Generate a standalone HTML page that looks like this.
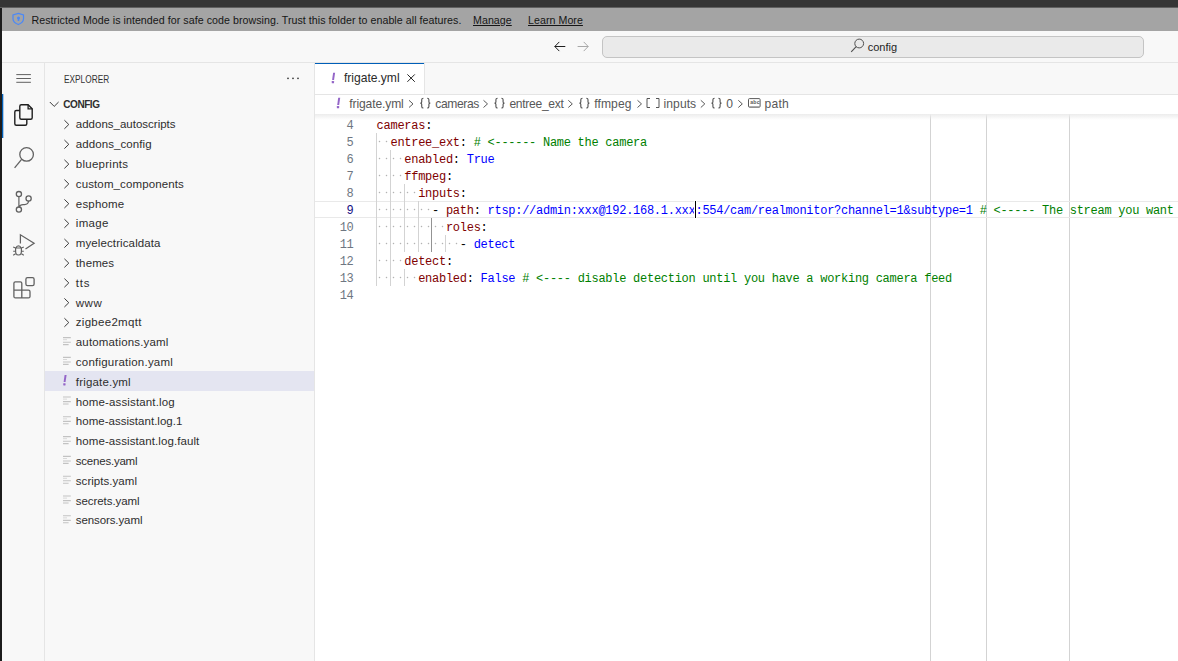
<!DOCTYPE html><html><head><meta charset="utf-8"><style>
*{margin:0;padding:0;box-sizing:border-box}
html,body{width:1178px;height:661px;overflow:hidden;background:#f8f8f8;font-family:"Liberation Sans",sans-serif;color:#3b3b3b}
.a{position:absolute}
svg{position:absolute;overflow:visible}
#topbar{left:0;top:0;width:1178px;height:7px;background:#353535}
#topedge{left:0;top:7px;width:1178px;height:1px;background:#606060}
#leftedge{left:0;top:8px;width:2px;height:653px;background:#1c1c1c}
#banner{left:2px;top:8px;width:1176px;height:23px;background:#a4a4a4;color:#161616;font-size:10.65px;letter-spacing:0.05px}
#banner span{position:absolute;top:5.6px;white-space:nowrap}
#titleborder{left:2px;top:62px;width:1176px;height:1px;background:#e5e5e5}
#search{left:602px;top:36px;width:542px;height:22px;background:#eaeaea;border:1px solid #c4c4c4;border-radius:5px}
#actborder{left:44px;top:63px;width:1px;height:598px;background:#e5e5e5}
#sideborder{left:314px;top:63px;width:1px;height:598px;background:#e5e5e5}
.row{position:absolute;left:45px;width:269px;height:19.8px;font-size:11.5px;line-height:19.8px;color:#2e2e2e;white-space:nowrap}
.sel{background:#e4e5f1;height:20px}
#tabline{left:315px;top:94px;width:863px;height:1px;background:#e5e5e5}
#tab{left:315px;top:63px;width:109px;height:31px;background:#fff;border-top:1px solid #005fb8}
#tabr{left:424px;top:63px;width:1px;height:31px;background:#e5e5e5}
#crumbs{left:315px;top:95px;width:863px;height:19px;background:#fff}
.cr{position:absolute;top:94.8px;height:19px;line-height:19px;font-size:12.1px;color:#585858;white-space:nowrap}
#editor{left:315px;top:114px;width:863px;height:547px;background:#fff}
#shadow{left:315px;top:114px;width:863px;height:6px;background:linear-gradient(#ececec,rgba(255,255,255,0))}
.ln{position:absolute;left:315px;width:38.2px;height:17px;line-height:17px;text-align:right;font-family:"Liberation Mono",monospace;font-size:12px;letter-spacing:-0.45px;color:#6e7681;white-space:pre}
.code{position:absolute;left:376.6px;height:17px;line-height:17px;font-family:"Liberation Mono",monospace;font-size:12px;letter-spacing:-0.27px;color:#000;white-space:pre}
.k{color:#800000}.s{color:#0000ff}.c{color:#008000}
.g{position:absolute;width:1px;background:#d3d3d3}
.dot{position:absolute;width:1px;height:1px;background:#c8c8c8}.dotx{position:absolute;width:3px;height:1px;background:rgba(0,0,0,0.05)}.doty{position:absolute;width:1px;height:3px;background:rgba(0,0,0,0.05)}
</style></head><body>
<div class="a" id="topbar"></div><div class="a" id="topedge"></div><div class="a" id="leftedge"></div>
<div class="a" id="banner"><svg style="left:10px;top:4px" width="14" height="14" viewBox="0 0 14 14"><path d="M6.3 1.4 L11.5 2.9 V6.8 C11.5 9.5 9.3 11.4 6.3 12.5 C3.3 11.4 1 9.5 1 6.8 V2.9 Z" fill="none" stroke="#4a88f7" stroke-width="1.2"/><circle cx="6.5" cy="5.9" r="1.5" fill="#4a88f7"/><path d="M5.9 6.5 H7.1 L7.3 9 H5.7 Z" fill="#4a88f7"/></svg><span style="left:29.5px">Restricted Mode is intended for safe code browsing. Trust this folder to enable all features.</span><span style="left:471px;text-decoration:underline">Manage</span><span style="left:526px;text-decoration:underline">Learn More</span></div>
<div class="a" id="titleborder"></div>
<svg style="left:553px;top:40px" width="14" height="12" viewBox="0 0 14 12"><path d="M6.3 1.9 L1.8 6.5 L6.3 11.1 M1.8 6.5 H12.3" fill="none" stroke="#1e1e1e" stroke-width="1"/></svg>
<svg style="left:576px;top:40px" width="14" height="12" viewBox="0 0 14 12"><path d="M7.7 1.9 L12.2 6.5 L7.7 11.1 M12.2 6.5 H1.6" fill="none" stroke="#a8a8a8" stroke-width="1"/></svg>
<div class="a" id="search"></div>
<svg style="left:850px;top:38px" width="15" height="15" viewBox="0 0 15 15"><circle cx="9.2" cy="5.5" r="4.4" fill="none" stroke="#505050" stroke-width="1"/><path d="M6.2 8.6 L1.2 13.8" stroke="#505050" stroke-width="1.1"/></svg>
<div class="a" style="left:867.7px;top:40.7px;font-size:11px;color:#1e1e1e">config</div>
<div class="a" id="actborder"></div><div class="a" id="sideborder"></div>
<svg style="left:0;top:0" width="45" height="320" viewBox="0 0 45 320"><rect x="2" y="94" width="1.3" height="44" fill="#005fb8"/><path d="M16.3 74.6 H30.9 M16.3 78.5 H30.9 M16.3 82.3 H30.9" stroke="#616161" stroke-width="1"/><path d="M21.3 104.7 H28.1 L32.2 108.8 V117.8 Q32.2 119.3 30.7 119.3 H21.3 Q19.8 119.3 19.8 117.8 V106.2 Q19.8 104.7 21.3 104.7 Z" fill="none" stroke="#1f1f1f" stroke-width="1.4"/><path d="M28.1 104.7 V108.8 H32.2" fill="none" stroke="#1f1f1f" stroke-width="1.3"/><path d="M19.8 110.5 H16.3 Q14.8 110.5 14.8 112 V123.7 Q14.8 125.2 16.3 125.2 H25.3 Q26.8 125.2 26.8 123.7 V119.3" fill="none" stroke="#1f1f1f" stroke-width="1.4"/><circle cx="26.6" cy="154.4" r="6.8" fill="none" stroke="#616161" stroke-width="1.3"/><path d="M21.6 159.4 L14.6 167.8" stroke="#616161" stroke-width="1.3"/><circle cx="18.9" cy="194.1" r="2.6" fill="none" stroke="#616161" stroke-width="1.3"/><circle cx="18.9" cy="209.6" r="2.6" fill="none" stroke="#616161" stroke-width="1.3"/><circle cx="28.6" cy="198.5" r="2.6" fill="none" stroke="#616161" stroke-width="1.3"/><path d="M18.9 196.4 V207.3 M19.3 207 Q20 204.6 23 204.6 H24.5 Q28.3 204.6 28.6 200.8" fill="none" stroke="#616161" stroke-width="1.2"/><path d="M20.4 243.4 V234.8 L34.1 243.2 L25.5 248.9" fill="none" stroke="#616161" stroke-width="1.25" stroke-linejoin="miter"/><path d="M15.6 248 V251.5 C15.6 253.8 17 255 18.5 255 C20 255 21.4 253.8 21.4 251.5 V248 Z M16.2 247.8 C16.4 246.3 17.3 245.8 18.5 245.8 C19.7 245.8 20.6 246.3 20.8 247.8" fill="none" stroke="#616161" stroke-width="1.2"/><path d="M13.2 246.9 L15.6 247.9 M13.2 251.2 H15.6 M13.2 255.3 L15.6 253.7 M23.8 246.9 L21.4 247.9 M23.8 251.2 H21.4 M23.8 255.3 L21.4 253.7" fill="none" stroke="#616161" stroke-width="1.1"/><path d="M13.9 283.3 Q13.9 281.8 15.4 281.8 H20.3 Q21.8 281.8 21.8 283.3 V290.2 H28.5 Q30 290.2 30 291.7 V296.4 Q30 297.9 28.5 297.9 H15.4 Q13.9 297.9 13.9 296.4 Z M13.9 290.2 H21.8 V297.9" fill="none" stroke="#616161" stroke-width="1.3"/><rect x="25.9" y="277.7" width="8.2" height="7.9" rx="1.6" fill="none" stroke="#616161" stroke-width="1.3"/></svg>
<div class="a" style="left:63.9px;top:74.4px;font-size:10px;line-height:12px;color:#333333;white-space:nowrap;transform-origin:0 0;transform:scaleX(0.83)">EXPLORER</div>
<svg style="left:0;top:0" width="320" height="100" viewBox="0 0 320 100"><circle cx="288" cy="78.3" r="0.9" fill="#3b3b3b"/><circle cx="293" cy="78.3" r="0.9" fill="#3b3b3b"/><circle cx="298" cy="78.3" r="0.9" fill="#3b3b3b"/></svg>
<div class="row" style="top:93.4px"><span class="a" style="left:18.3px;top:1.6px;font-weight:bold;font-size:10px;letter-spacing:-0.45px;color:#2e2e2e">CONFIG</span></div>
<div class="row" style="top:113.2px"><span class="a" style="left:30.8px;top:2.2px;letter-spacing:0.000px">addons_autoscripts</span></div>
<div class="row" style="top:133.0px"><span class="a" style="left:30.8px;top:2.2px;letter-spacing:0.083px">addons_config</span></div>
<div class="row" style="top:152.8px"><span class="a" style="left:30.8px;top:2.2px;letter-spacing:0.267px">blueprints</span></div>
<div class="row" style="top:172.6px"><span class="a" style="left:30.8px;top:2.2px;letter-spacing:0.119px">custom_components</span></div>
<div class="row" style="top:192.4px"><span class="a" style="left:30.8px;top:2.2px;letter-spacing:0.183px">esphome</span></div>
<div class="row" style="top:212.2px"><span class="a" style="left:30.8px;top:2.2px;letter-spacing:0.325px">image</span></div>
<div class="row" style="top:232.0px"><span class="a" style="left:30.8px;top:2.2px;letter-spacing:0.107px">myelectricaldata</span></div>
<div class="row" style="top:251.8px"><span class="a" style="left:30.8px;top:2.2px;letter-spacing:0.120px">themes</span></div>
<div class="row" style="top:271.6px"><span class="a" style="left:30.8px;top:2.2px;letter-spacing:0.800px">tts</span></div>
<div class="row" style="top:291.4px"><span class="a" style="left:30.8px;top:2.2px;letter-spacing:0.500px">www</span></div>
<div class="row" style="top:311.2px"><span class="a" style="left:30.8px;top:2.2px;letter-spacing:0.290px">zigbee2mqtt</span></div>
<div class="row" style="top:331.0px"><span class="a" style="left:30.8px;top:2.2px;letter-spacing:0.153px">automations.yaml</span></div>
<div class="row" style="top:350.8px"><span class="a" style="left:30.8px;top:2.2px;letter-spacing:0.218px">configuration.yaml</span></div>
<div class="row sel" style="top:370.6px"><span class="a" style="left:30.8px;top:2.2px;letter-spacing:0.180px">frigate.yml</span></div>
<div class="row" style="top:390.4px"><span class="a" style="left:30.8px;top:2.2px;letter-spacing:0.135px">home-assistant.log</span></div>
<div class="row" style="top:410.2px"><span class="a" style="left:30.8px;top:2.2px;letter-spacing:0.026px">home-assistant.log.1</span></div>
<div class="row" style="top:430.0px"><span class="a" style="left:30.8px;top:2.2px;letter-spacing:0.087px">home-assistant.log.fault</span></div>
<div class="row" style="top:449.8px"><span class="a" style="left:30.8px;top:2.2px;letter-spacing:-0.220px">scenes.yaml</span></div>
<div class="row" style="top:469.6px"><span class="a" style="left:30.8px;top:2.2px;letter-spacing:0.045px">scripts.yaml</span></div>
<div class="row" style="top:489.4px"><span class="a" style="left:30.8px;top:2.2px;letter-spacing:-0.064px">secrets.yaml</span></div>
<div class="row" style="top:509.2px"><span class="a" style="left:30.8px;top:2.2px;letter-spacing:-0.100px">sensors.yaml</span></div>
<div class="a" id="tabline"></div><div class="a" id="tab"></div><div class="a" id="tabr"></div>
<div class="a" id="crumbs"></div><div class="a" id="editor"></div>
<svg style="left:0;top:0" width="1" height="1" viewBox="0 0 1 1"><path d="M333.10 72.80 h2 l-1.05 7.2 h-1.95 z" fill="#9466c8"/><rect x="331.75" y="81.10" width="2.3" height="2.2" rx="0.4" fill="#9466c8"/><path d="M338.20 97.80 h2 l-1.05 7.2 h-1.95 z" fill="#9466c8"/><rect x="336.85" y="106.10" width="2.3" height="2.2" rx="0.4" fill="#9466c8"/></svg>
<div class="a" style="left:344px;top:70.8px;font-size:12.1px;letter-spacing:-0.02px;color:#2a2a2a;white-space:nowrap">frigate.yml</div>
<svg style="left:0;top:0" width="1" height="1" viewBox="0 0 1 1"><path d="M407.4 74.4 L414.8 81.8 M414.8 74.4 L407.4 81.8" stroke="#262626" stroke-width="1"/></svg>
<div class="cr" style="left:349.3px;letter-spacing:-0.13px">frigate.yml</div>
<div class="cr" style="left:435.3px;letter-spacing:-0.38px">cameras</div>
<div class="cr" style="left:509.4px;letter-spacing:-0.3px">entree_ext</div>
<div class="cr" style="left:594.2px;letter-spacing:0.12px">ffmpeg</div>
<div class="cr" style="left:663.6px;letter-spacing:0.05px">inputs</div>
<div class="cr" style="left:726.3px;">0</div>
<div class="cr" style="left:764.6px;letter-spacing:0.2px">path</div>
<svg style="left:0;top:0" width="320" height="600" viewBox="0 0 320 600">
<path d="M49.8 102 L54.2 106.4 L58.6 102" fill="none" stroke="#3b3b3b" stroke-width="1"/>
<path d="M64.4 120.2 L68.8 124.5 L64.4 128.8" fill="none" stroke="#3b3b3b" stroke-width="1"/>
<path d="M64.4 140.0 L68.8 144.3 L64.4 148.6" fill="none" stroke="#3b3b3b" stroke-width="1"/>
<path d="M64.4 159.8 L68.8 164.1 L64.4 168.4" fill="none" stroke="#3b3b3b" stroke-width="1"/>
<path d="M64.4 179.6 L68.8 183.9 L64.4 188.2" fill="none" stroke="#3b3b3b" stroke-width="1"/>
<path d="M64.4 199.4 L68.8 203.7 L64.4 208.0" fill="none" stroke="#3b3b3b" stroke-width="1"/>
<path d="M64.4 219.2 L68.8 223.5 L64.4 227.8" fill="none" stroke="#3b3b3b" stroke-width="1"/>
<path d="M64.4 239.0 L68.8 243.3 L64.4 247.6" fill="none" stroke="#3b3b3b" stroke-width="1"/>
<path d="M64.4 258.8 L68.8 263.1 L64.4 267.4" fill="none" stroke="#3b3b3b" stroke-width="1"/>
<path d="M64.4 278.6 L68.8 282.9 L64.4 287.2" fill="none" stroke="#3b3b3b" stroke-width="1"/>
<path d="M64.4 298.4 L68.8 302.7 L64.4 307.0" fill="none" stroke="#3b3b3b" stroke-width="1"/>
<path d="M64.4 318.2 L68.8 322.5 L64.4 326.8" fill="none" stroke="#3b3b3b" stroke-width="1"/>
<path d="M63 337.6 H70.8 M63 342.2 H70.8 M63 344.6 H68.6" stroke="#c2c2c2" stroke-width="1.1"/><path d="M63 339.7 H67" stroke="#d8d8d8" stroke-width="1"/>
<path d="M63 357.4 H70.8 M63 362.0 H70.8 M63 364.4 H68.6" stroke="#c2c2c2" stroke-width="1.1"/><path d="M63 359.5 H67" stroke="#d8d8d8" stroke-width="1"/>
<path d="M64.60 374.90 h2 l-1.05 7.2 h-1.95 z" fill="#9466c8"/><rect x="63.25" y="383.20" width="2.3" height="2.2" rx="0.4" fill="#9466c8"/>
<path d="M63 397.0 H70.8 M63 401.6 H70.8 M63 404.0 H68.6" stroke="#c2c2c2" stroke-width="1.1"/><path d="M63 399.1 H67" stroke="#d8d8d8" stroke-width="1"/>
<path d="M63 416.8 H70.8 M63 421.4 H70.8 M63 423.8 H68.6" stroke="#c2c2c2" stroke-width="1.1"/><path d="M63 418.9 H67" stroke="#d8d8d8" stroke-width="1"/>
<path d="M63 436.6 H70.8 M63 441.2 H70.8 M63 443.6 H68.6" stroke="#c2c2c2" stroke-width="1.1"/><path d="M63 438.7 H67" stroke="#d8d8d8" stroke-width="1"/>
<path d="M63 456.4 H70.8 M63 461.0 H70.8 M63 463.4 H68.6" stroke="#c2c2c2" stroke-width="1.1"/><path d="M63 458.5 H67" stroke="#d8d8d8" stroke-width="1"/>
<path d="M63 476.2 H70.8 M63 480.8 H70.8 M63 483.2 H68.6" stroke="#c2c2c2" stroke-width="1.1"/><path d="M63 478.3 H67" stroke="#d8d8d8" stroke-width="1"/>
<path d="M63 496.0 H70.8 M63 500.6 H70.8 M63 503.0 H68.6" stroke="#c2c2c2" stroke-width="1.1"/><path d="M63 498.1 H67" stroke="#d8d8d8" stroke-width="1"/>
<path d="M63 515.8 H70.8 M63 520.4 H70.8 M63 522.8 H68.6" stroke="#c2c2c2" stroke-width="1.1"/><path d="M63 517.9 H67" stroke="#d8d8d8" stroke-width="1"/>
</svg>
<svg style="left:0;top:0" width="1" height="1" viewBox="0 0 1 1">
<path d="M409.0 100.3 L413.0 103.9 L409.0 107.5" fill="none" stroke="#5a5a5a" stroke-width="1"/>
<path d="M483.5 100.3 L487.5 103.9 L483.5 107.5" fill="none" stroke="#5a5a5a" stroke-width="1"/>
<path d="M568.3 100.3 L572.3 103.9 L568.3 107.5" fill="none" stroke="#5a5a5a" stroke-width="1"/>
<path d="M637.5 100.3 L641.5 103.9 L637.5 107.5" fill="none" stroke="#5a5a5a" stroke-width="1"/>
<path d="M700.8 100.3 L704.8 103.9 L700.8 107.5" fill="none" stroke="#5a5a5a" stroke-width="1"/>
<path d="M738.3 100.3 L742.3 103.9 L738.3 107.5" fill="none" stroke="#5a5a5a" stroke-width="1"/>
<path d="M423.40 98.20 Q421.70 98.20 421.70 99.80 V101.90 Q421.70 103.10 420.30 103.10 Q421.70 103.10 421.70 104.30 V106.40 Q421.70 108.00 423.40 108.00 M427.20 98.20 Q428.90 98.20 428.90 99.80 V101.90 Q428.90 103.10 430.30 103.10 Q428.90 103.10 428.90 104.30 V106.40 Q428.90 108.00 427.20 108.00" fill="none" stroke="#555555" stroke-width="1.15"/>
<path d="M497.60 98.20 Q495.90 98.20 495.90 99.80 V101.90 Q495.90 103.10 494.50 103.10 Q495.90 103.10 495.90 104.30 V106.40 Q495.90 108.00 497.60 108.00 M501.40 98.20 Q503.10 98.20 503.10 99.80 V101.90 Q503.10 103.10 504.50 103.10 Q503.10 103.10 503.10 104.30 V106.40 Q503.10 108.00 501.40 108.00" fill="none" stroke="#555555" stroke-width="1.15"/>
<path d="M582.50 98.20 Q580.80 98.20 580.80 99.80 V101.90 Q580.80 103.10 579.40 103.10 Q580.80 103.10 580.80 104.30 V106.40 Q580.80 108.00 582.50 108.00 M586.30 98.20 Q588.00 98.20 588.00 99.80 V101.90 Q588.00 103.10 589.40 103.10 Q588.00 103.10 588.00 104.30 V106.40 Q588.00 108.00 586.30 108.00" fill="none" stroke="#555555" stroke-width="1.15"/>
<path d="M714.60 98.20 Q712.90 98.20 712.90 99.80 V101.90 Q712.90 103.10 711.50 103.10 Q712.90 103.10 712.90 104.30 V106.40 Q712.90 108.00 714.60 108.00 M718.40 98.20 Q720.10 98.20 720.10 99.80 V101.90 Q720.10 103.10 721.50 103.10 Q720.10 103.10 720.10 104.30 V106.40 Q720.10 108.00 718.40 108.00" fill="none" stroke="#555555" stroke-width="1.15"/>
<path d="M650 98.5 H647 V107.5 H650 M656 98.5 H659 V107.5 H656" fill="none" stroke="#555555" stroke-width="1"/>
<rect x="748.5" y="98.6" width="11.6" height="8.6" rx="1" fill="none" stroke="#5a5a5a" stroke-width="1"/><path d="M749 106.9 H759.6" stroke="#9a9a9a" stroke-width="1"/><text x="750.2" y="104" font-family="Liberation Sans" font-weight="bold" font-size="5.2" fill="#5a5a5a" letter-spacing="0.2">abc</text>
</svg>
<div class="a" style="left:930.1px;top:114px;width:1px;height:547px;background:#d3d3d3"></div>
<div class="a" style="left:986.1px;top:114px;width:1px;height:547px;background:#d3d3d3"></div>
<div class="a" style="left:1068.9px;top:114px;width:1px;height:547px;background:#d3d3d3"></div>
<div class="a" style="left:315px;top:201px;width:863px;height:17px;border-top:1px solid #e9e9e9;border-bottom:1px solid #e9e9e9"></div>
<div class="g" style="left:376px;top:132.8px;height:17px;background:#d3d3d3"></div>
<div class="g" style="left:376px;top:149.8px;height:17px;background:#d3d3d3"></div>
<div class="g" style="left:390px;top:149.8px;height:17px;background:#d3d3d3"></div>
<div class="g" style="left:376px;top:166.8px;height:17px;background:#d3d3d3"></div>
<div class="g" style="left:390px;top:166.8px;height:17px;background:#d3d3d3"></div>
<div class="g" style="left:376px;top:183.8px;height:17px;background:#d3d3d3"></div>
<div class="g" style="left:390px;top:183.8px;height:17px;background:#d3d3d3"></div>
<div class="g" style="left:404px;top:183.8px;height:17px;background:#d3d3d3"></div>
<div class="g" style="left:376px;top:200.8px;height:17px;background:#d3d3d3"></div>
<div class="g" style="left:390px;top:200.8px;height:17px;background:#d3d3d3"></div>
<div class="g" style="left:404px;top:200.8px;height:17px;background:#d3d3d3"></div>
<div class="g" style="left:418px;top:200.8px;height:17px;background:#d3d3d3"></div>
<div class="g" style="left:376px;top:217.8px;height:17px;background:#d3d3d3"></div>
<div class="g" style="left:390px;top:217.8px;height:17px;background:#d3d3d3"></div>
<div class="g" style="left:404px;top:217.8px;height:17px;background:#d3d3d3"></div>
<div class="g" style="left:418px;top:217.8px;height:17px;background:#d3d3d3"></div>
<div class="g" style="left:431px;top:217.8px;height:17px;background:#939393"></div>
<div class="g" style="left:376px;top:234.8px;height:17px;background:#d3d3d3"></div>
<div class="g" style="left:390px;top:234.8px;height:17px;background:#d3d3d3"></div>
<div class="g" style="left:404px;top:234.8px;height:17px;background:#d3d3d3"></div>
<div class="g" style="left:418px;top:234.8px;height:17px;background:#d3d3d3"></div>
<div class="g" style="left:431px;top:234.8px;height:17px;background:#939393"></div>
<div class="g" style="left:445px;top:234.8px;height:17px;background:#d3d3d3"></div>
<div class="g" style="left:376px;top:251.8px;height:17px;background:#d3d3d3"></div>
<div class="g" style="left:390px;top:251.8px;height:17px;background:#d3d3d3"></div>
<div class="g" style="left:376px;top:268.8px;height:17px;background:#d3d3d3"></div>
<div class="g" style="left:390px;top:268.8px;height:17px;background:#d3d3d3"></div>
<div class="g" style="left:404px;top:268.8px;height:17px;background:#d3d3d3"></div>
<div class="dot" style="left:379px;top:141px"></div><div class="dotx" style="left:378px;top:141px"></div><div class="doty" style="left:379px;top:140px"></div>
<div class="dot" style="left:386px;top:141px"></div><div class="dotx" style="left:385px;top:141px"></div><div class="doty" style="left:386px;top:140px"></div>
<div class="dot" style="left:379px;top:158px"></div><div class="dotx" style="left:378px;top:158px"></div><div class="doty" style="left:379px;top:157px"></div>
<div class="dot" style="left:386px;top:158px"></div><div class="dotx" style="left:385px;top:158px"></div><div class="doty" style="left:386px;top:157px"></div>
<div class="dot" style="left:393px;top:158px"></div><div class="dotx" style="left:392px;top:158px"></div><div class="doty" style="left:393px;top:157px"></div>
<div class="dot" style="left:400px;top:158px"></div><div class="dotx" style="left:399px;top:158px"></div><div class="doty" style="left:400px;top:157px"></div>
<div class="dot" style="left:379px;top:175px"></div><div class="dotx" style="left:378px;top:175px"></div><div class="doty" style="left:379px;top:174px"></div>
<div class="dot" style="left:386px;top:175px"></div><div class="dotx" style="left:385px;top:175px"></div><div class="doty" style="left:386px;top:174px"></div>
<div class="dot" style="left:393px;top:175px"></div><div class="dotx" style="left:392px;top:175px"></div><div class="doty" style="left:393px;top:174px"></div>
<div class="dot" style="left:400px;top:175px"></div><div class="dotx" style="left:399px;top:175px"></div><div class="doty" style="left:400px;top:174px"></div>
<div class="dot" style="left:379px;top:192px"></div><div class="dotx" style="left:378px;top:192px"></div><div class="doty" style="left:379px;top:191px"></div>
<div class="dot" style="left:386px;top:192px"></div><div class="dotx" style="left:385px;top:192px"></div><div class="doty" style="left:386px;top:191px"></div>
<div class="dot" style="left:393px;top:192px"></div><div class="dotx" style="left:392px;top:192px"></div><div class="doty" style="left:393px;top:191px"></div>
<div class="dot" style="left:400px;top:192px"></div><div class="dotx" style="left:399px;top:192px"></div><div class="doty" style="left:400px;top:191px"></div>
<div class="dot" style="left:407px;top:192px"></div><div class="dotx" style="left:406px;top:192px"></div><div class="doty" style="left:407px;top:191px"></div>
<div class="dot" style="left:414px;top:192px"></div><div class="dotx" style="left:413px;top:192px"></div><div class="doty" style="left:414px;top:191px"></div>
<div class="dot" style="left:379px;top:209px"></div><div class="dotx" style="left:378px;top:209px"></div><div class="doty" style="left:379px;top:208px"></div>
<div class="dot" style="left:386px;top:209px"></div><div class="dotx" style="left:385px;top:209px"></div><div class="doty" style="left:386px;top:208px"></div>
<div class="dot" style="left:393px;top:209px"></div><div class="dotx" style="left:392px;top:209px"></div><div class="doty" style="left:393px;top:208px"></div>
<div class="dot" style="left:400px;top:209px"></div><div class="dotx" style="left:399px;top:209px"></div><div class="doty" style="left:400px;top:208px"></div>
<div class="dot" style="left:407px;top:209px"></div><div class="dotx" style="left:406px;top:209px"></div><div class="doty" style="left:407px;top:208px"></div>
<div class="dot" style="left:414px;top:209px"></div><div class="dotx" style="left:413px;top:209px"></div><div class="doty" style="left:414px;top:208px"></div>
<div class="dot" style="left:421px;top:209px"></div><div class="dotx" style="left:420px;top:209px"></div><div class="doty" style="left:421px;top:208px"></div>
<div class="dot" style="left:428px;top:209px"></div><div class="dotx" style="left:427px;top:209px"></div><div class="doty" style="left:428px;top:208px"></div>
<div class="dot" style="left:379px;top:226px"></div><div class="dotx" style="left:378px;top:226px"></div><div class="doty" style="left:379px;top:225px"></div>
<div class="dot" style="left:386px;top:226px"></div><div class="dotx" style="left:385px;top:226px"></div><div class="doty" style="left:386px;top:225px"></div>
<div class="dot" style="left:393px;top:226px"></div><div class="dotx" style="left:392px;top:226px"></div><div class="doty" style="left:393px;top:225px"></div>
<div class="dot" style="left:400px;top:226px"></div><div class="dotx" style="left:399px;top:226px"></div><div class="doty" style="left:400px;top:225px"></div>
<div class="dot" style="left:407px;top:226px"></div><div class="dotx" style="left:406px;top:226px"></div><div class="doty" style="left:407px;top:225px"></div>
<div class="dot" style="left:414px;top:226px"></div><div class="dotx" style="left:413px;top:226px"></div><div class="doty" style="left:414px;top:225px"></div>
<div class="dot" style="left:421px;top:226px"></div><div class="dotx" style="left:420px;top:226px"></div><div class="doty" style="left:421px;top:225px"></div>
<div class="dot" style="left:428px;top:226px"></div><div class="dotx" style="left:427px;top:226px"></div><div class="doty" style="left:428px;top:225px"></div>
<div class="dot" style="left:435px;top:226px"></div><div class="dotx" style="left:434px;top:226px"></div><div class="doty" style="left:435px;top:225px"></div>
<div class="dot" style="left:442px;top:226px"></div><div class="dotx" style="left:441px;top:226px"></div><div class="doty" style="left:442px;top:225px"></div>
<div class="dot" style="left:379px;top:243px"></div><div class="dotx" style="left:378px;top:243px"></div><div class="doty" style="left:379px;top:242px"></div>
<div class="dot" style="left:386px;top:243px"></div><div class="dotx" style="left:385px;top:243px"></div><div class="doty" style="left:386px;top:242px"></div>
<div class="dot" style="left:393px;top:243px"></div><div class="dotx" style="left:392px;top:243px"></div><div class="doty" style="left:393px;top:242px"></div>
<div class="dot" style="left:400px;top:243px"></div><div class="dotx" style="left:399px;top:243px"></div><div class="doty" style="left:400px;top:242px"></div>
<div class="dot" style="left:407px;top:243px"></div><div class="dotx" style="left:406px;top:243px"></div><div class="doty" style="left:407px;top:242px"></div>
<div class="dot" style="left:414px;top:243px"></div><div class="dotx" style="left:413px;top:243px"></div><div class="doty" style="left:414px;top:242px"></div>
<div class="dot" style="left:421px;top:243px"></div><div class="dotx" style="left:420px;top:243px"></div><div class="doty" style="left:421px;top:242px"></div>
<div class="dot" style="left:428px;top:243px"></div><div class="dotx" style="left:427px;top:243px"></div><div class="doty" style="left:428px;top:242px"></div>
<div class="dot" style="left:435px;top:243px"></div><div class="dotx" style="left:434px;top:243px"></div><div class="doty" style="left:435px;top:242px"></div>
<div class="dot" style="left:442px;top:243px"></div><div class="dotx" style="left:441px;top:243px"></div><div class="doty" style="left:442px;top:242px"></div>
<div class="dot" style="left:449px;top:243px"></div><div class="dotx" style="left:448px;top:243px"></div><div class="doty" style="left:449px;top:242px"></div>
<div class="dot" style="left:456px;top:243px"></div><div class="dotx" style="left:455px;top:243px"></div><div class="doty" style="left:456px;top:242px"></div>
<div class="dot" style="left:379px;top:260px"></div><div class="dotx" style="left:378px;top:260px"></div><div class="doty" style="left:379px;top:259px"></div>
<div class="dot" style="left:386px;top:260px"></div><div class="dotx" style="left:385px;top:260px"></div><div class="doty" style="left:386px;top:259px"></div>
<div class="dot" style="left:393px;top:260px"></div><div class="dotx" style="left:392px;top:260px"></div><div class="doty" style="left:393px;top:259px"></div>
<div class="dot" style="left:400px;top:260px"></div><div class="dotx" style="left:399px;top:260px"></div><div class="doty" style="left:400px;top:259px"></div>
<div class="dot" style="left:379px;top:277px"></div><div class="dotx" style="left:378px;top:277px"></div><div class="doty" style="left:379px;top:276px"></div>
<div class="dot" style="left:386px;top:277px"></div><div class="dotx" style="left:385px;top:277px"></div><div class="doty" style="left:386px;top:276px"></div>
<div class="dot" style="left:393px;top:277px"></div><div class="dotx" style="left:392px;top:277px"></div><div class="doty" style="left:393px;top:276px"></div>
<div class="dot" style="left:400px;top:277px"></div><div class="dotx" style="left:399px;top:277px"></div><div class="doty" style="left:400px;top:276px"></div>
<div class="dot" style="left:407px;top:277px"></div><div class="dotx" style="left:406px;top:277px"></div><div class="doty" style="left:407px;top:276px"></div>
<div class="dot" style="left:414px;top:277px"></div><div class="dotx" style="left:413px;top:277px"></div><div class="doty" style="left:414px;top:276px"></div>
<div class="ln" style="top:117.8px">4</div>
<div class="code" style="top:118.2px"><span class="k">cameras</span><span class="p">:</span></div>
<div class="ln" style="top:134.8px">5</div>
<div class="code" style="top:135.2px"><span class="p">  </span><span class="k">entree_ext</span><span class="p">: </span><span class="c"># &lt;------ Name the camera</span></div>
<div class="ln" style="top:151.8px">6</div>
<div class="code" style="top:152.2px"><span class="p">    </span><span class="k">enabled</span><span class="p">: </span><span class="s">True</span></div>
<div class="ln" style="top:168.8px">7</div>
<div class="code" style="top:169.2px"><span class="p">    </span><span class="k">ffmpeg</span><span class="p">:</span></div>
<div class="ln" style="top:185.8px">8</div>
<div class="code" style="top:186.2px"><span class="p">      </span><span class="k">inputs</span><span class="p">:</span></div>
<div class="ln" style="top:202.8px;color:#171184">9</div>
<div class="code" style="top:203.2px"><span class="p">        - </span><span class="k">path</span><span class="p">: </span><span class="s">rtsp://admin:xxx@192.168.1.xxx:554/cam/realmonitor?channel=1&amp;subtype=1</span><span class="p"> </span><span class="c"># &lt;----- The stream you want</span></div>
<div class="ln" style="top:219.8px">10</div>
<div class="code" style="top:220.2px"><span class="p">          </span><span class="k">roles</span><span class="p">:</span></div>
<div class="ln" style="top:236.8px">11</div>
<div class="code" style="top:237.2px"><span class="p">            - </span><span class="s">detect</span></div>
<div class="ln" style="top:253.8px">12</div>
<div class="code" style="top:254.2px"><span class="p">    </span><span class="k">detect</span><span class="p">:</span></div>
<div class="ln" style="top:270.8px">13</div>
<div class="code" style="top:271.2px"><span class="p">      </span><span class="k">enabled</span><span class="p">: </span><span class="s">False</span><span class="p"> </span><span class="c"># &lt;---- disable detection until you have a working camera feed</span></div>
<div class="ln" style="top:287.8px">14</div>
<div class="a" style="left:694px;top:201px;width:3.4px;height:18px;background:#fff"></div><div class="a" style="left:695px;top:201px;width:1.3px;height:17px;background:#000"></div>
<div class="a" id="shadow"></div>
</body></html>
